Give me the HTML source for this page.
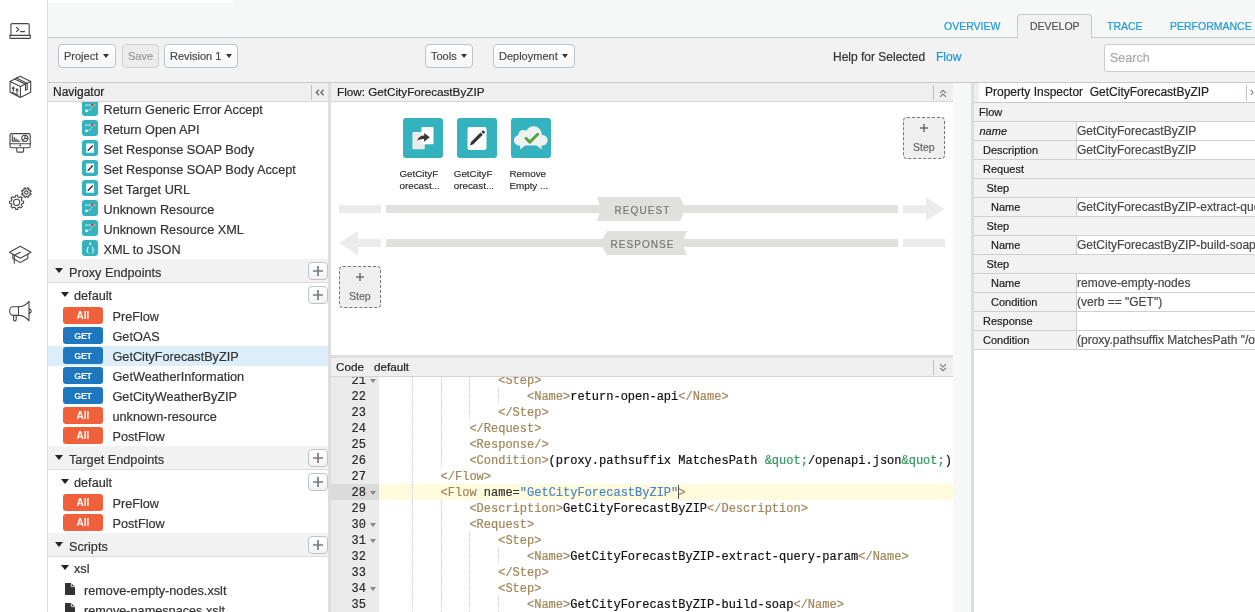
<!DOCTYPE html><html><head><meta charset="utf-8"><style>
*{box-sizing:border-box;margin:0;padding:0}
html,body{width:1255px;height:612px;overflow:hidden;background:#fff;font-family:"Liberation Sans",sans-serif;color:#333}
.a{position:absolute;white-space:nowrap}
svg{display:block}
#root div,#root span{-webkit-text-stroke-width:0.2px}
.tab{top:21px;font-size:10.5px;color:#1d9ad6;line-height:10px}
.btn{top:44px;height:24px;border:1px solid #b9c3ca;border-radius:4px;background:linear-gradient(#fff,#f5f5f5);font-size:11px;color:#4a4a4a;line-height:22px;padding-left:5px}
.caret{display:inline-block;width:0;height:0;border-left:3.5px solid transparent;border-right:3.5px solid transparent;border-top:4.5px solid #333;vertical-align:middle;margin-left:4.5px;margin-top:-2px}
.hdr{background:#efefef;border-bottom:1px solid #d5d5d5;font-size:12px;color:#222}
.tx{font-size:12.7px;color:#333;line-height:16px;-webkit-text-stroke:0.25px #333}
.sec{background:#f2f2f2;border-bottom:1px solid #dcdcdc}
.tri{width:0;height:0;border-left:4px solid transparent;border-right:4px solid transparent;border-top:5px solid #222}
.plus{width:20px;height:18px;border:1px solid #b9c3ca;border-radius:4px;background:linear-gradient(#fff,#f3f3f3)}
.badge{width:40px;height:16.6px;border-radius:3px;color:#fff;font-weight:bold;font-size:10px;text-align:center;line-height:17px}
.get{letter-spacing:-0.4px;font-size:9px;line-height:18px}
#root .badge{-webkit-text-stroke-width:0}
.all{background:#f0603a}
.get{background:#1f77c0}
.code{font-family:'Liberation Mono',monospace;font-size:12px;line-height:16px;white-space:pre;-webkit-text-stroke:0.2px currentColor}
.code span{-webkit-text-stroke:0.2px currentColor}
.pic{width:16px;height:16px;border-radius:3px;background:#34b2bd}
</style></head><body><div id="root" style="position:absolute;left:0;top:0;width:1255px;height:612px;overflow:hidden;background:#fff;will-change:transform">
<div class="a" style="left:0;top:0;width:48px;height:612px;background:#fff;border-right:1px solid #dcdcdc"></div>
<div class="a" style="left:48px;top:0;width:1207px;height:38px;background:#f6f8f8;border-bottom:1px solid #c9c9c9"></div>
<div class="a" style="left:48px;top:0;width:185px;height:3px;background:#fff"></div>
<div class="a tab" style="left:944px">OVERVIEW</div>
<div class="a" style="left:1017px;top:14px;width:75px;height:25px;background:#f2f2f2;border:1px solid #c9c9c9;border-bottom:none;border-radius:4px 4px 0 0"></div>
<div class="a tab" style="left:1030px;color:#555">DEVELOP</div>
<div class="a tab" style="left:1107px">TRACE</div>
<div class="a tab" style="left:1170px">PERFORMANCE</div>
<div class="a" style="left:48px;top:38px;width:1207px;height:45px;background:#f2f2f2;border-bottom:1px solid #c9c9c9"></div>
<div class="a btn" style="left:58px;width:58px">Project<span class="caret"></span></div>
<div class="a btn" style="left:122px;width:37px;color:#999;background:#ececec;border-color:#cfd5d9">Save</div>
<div class="a btn" style="left:164px;width:74px">Revision 1<span class="caret"></span></div>
<div class="a btn" style="left:425px;width:48px">Tools<span class="caret"></span></div>
<div class="a btn" style="left:493px;width:82px">Deployment<span class="caret"></span></div>
<div class="a" style="left:833px;top:50px;font-size:12px;color:#333">Help for Selected</div>
<div class="a" style="left:936px;top:50px;font-size:12px;color:#1d9ad6">Flow</div>
<div class="a" style="left:1104px;top:44px;width:160px;height:28px;background:#fff;border:1px solid #ccc;border-radius:3px;font-size:12.5px;color:#aaa;padding:6px 0 0 5px">Search</div>
<div class="a hdr" style="left:48px;top:83px;width:280px;height:19px"></div>
<div class="a" style="left:53px;top:85px;font-size:12px;color:#222">Navigator</div>
<div class="a" style="left:311px;top:85px;width:1px;height:15px;background:#b8c4cc"></div>
<svg class="a" style="left:315px;top:88.5px" width="10" height="7" viewBox="0 0 10 7"><path d="M4 0.8L1.4 3.5L4 6.2M8.6 0.8L6 3.5L8.6 6.2" stroke="#6a6a6a" stroke-width="1.4" fill="none"/></svg>
<div class="a" style="left:328px;top:83px;width:3px;height:529px;background:#dedede"></div>
<div class="a" style="left:48px;top:102px;width:280px;height:510px;overflow:hidden">
<div class="a" style="left:34px;top:-2px;width:16px;height:16px"><svg width="16" height="16" viewBox="0 0 16 16"><rect width="16" height="16" rx="3" fill="#34b2bd"/><path d="M3 5.1H13.2" stroke="#fff" stroke-opacity="0.85" stroke-width="0.9"/><path d="M10.3 5.6C10.2 8.6 7.8 10.8 4.8 10.8" stroke="#fff" stroke-width="0.9" stroke-dasharray="1.1 0.7" fill="none"/><circle cx="4.5" cy="10.8" r="1.35" fill="#fff"/><circle cx="10.3" cy="5.1" r="1.25" fill="#e8281e"/></svg></div>
<div class="a tx" style="left:55.5px;top:0px">Return Generic Error Accept</div>
<div class="a" style="left:34px;top:18px;width:16px;height:16px"><svg width="16" height="16" viewBox="0 0 16 16"><rect width="16" height="16" rx="3" fill="#34b2bd"/><path d="M3 5.1H13.2" stroke="#fff" stroke-opacity="0.85" stroke-width="0.9"/><path d="M10.3 5.6C10.2 8.6 7.8 10.8 4.8 10.8" stroke="#fff" stroke-width="0.9" stroke-dasharray="1.1 0.7" fill="none"/><circle cx="4.5" cy="10.8" r="1.35" fill="#fff"/><circle cx="10.3" cy="5.1" r="1.25" fill="#e8281e"/></svg></div>
<div class="a tx" style="left:55.5px;top:20px">Return Open API</div>
<div class="a" style="left:34px;top:38px;width:16px;height:16px"><svg width="16" height="16" viewBox="0 0 16 16"><rect width="16" height="16" rx="3" fill="#34b2bd"/><rect x="4.2" y="3.5" width="7.8" height="9.2" fill="#fff"/><path d="M5.8 10.8L10.8 5.4" stroke="#333" stroke-width="1.4"/><path d="M5.3 11.3L6 10.6" stroke="#e8281e" stroke-width="0.6"/></svg></div>
<div class="a tx" style="left:55.5px;top:40px">Set Response SOAP Body</div>
<div class="a" style="left:34px;top:58px;width:16px;height:16px"><svg width="16" height="16" viewBox="0 0 16 16"><rect width="16" height="16" rx="3" fill="#34b2bd"/><rect x="4.2" y="3.5" width="7.8" height="9.2" fill="#fff"/><path d="M5.8 10.8L10.8 5.4" stroke="#333" stroke-width="1.4"/><path d="M5.3 11.3L6 10.6" stroke="#e8281e" stroke-width="0.6"/></svg></div>
<div class="a tx" style="left:55.5px;top:60px">Set Response SOAP Body Accept</div>
<div class="a" style="left:34px;top:78px;width:16px;height:16px"><svg width="16" height="16" viewBox="0 0 16 16"><rect width="16" height="16" rx="3" fill="#34b2bd"/><rect x="4.2" y="3.5" width="7.8" height="9.2" fill="#fff"/><path d="M5.8 10.8L10.8 5.4" stroke="#333" stroke-width="1.4"/><path d="M5.3 11.3L6 10.6" stroke="#e8281e" stroke-width="0.6"/></svg></div>
<div class="a tx" style="left:55.5px;top:80px">Set Target URL</div>
<div class="a" style="left:34px;top:98px;width:16px;height:16px"><svg width="16" height="16" viewBox="0 0 16 16"><rect width="16" height="16" rx="3" fill="#34b2bd"/><path d="M3 5.1H13.2" stroke="#fff" stroke-opacity="0.85" stroke-width="0.9"/><path d="M10.3 5.6C10.2 8.6 7.8 10.8 4.8 10.8" stroke="#fff" stroke-width="0.9" stroke-dasharray="1.1 0.7" fill="none"/><circle cx="4.5" cy="10.8" r="1.35" fill="#fff"/><circle cx="10.3" cy="5.1" r="1.25" fill="#e8281e"/></svg></div>
<div class="a tx" style="left:55.5px;top:100px">Unknown Resource</div>
<div class="a" style="left:34px;top:118px;width:16px;height:16px"><svg width="16" height="16" viewBox="0 0 16 16"><rect width="16" height="16" rx="3" fill="#34b2bd"/><path d="M3 5.1H13.2" stroke="#fff" stroke-opacity="0.85" stroke-width="0.9"/><path d="M10.3 5.6C10.2 8.6 7.8 10.8 4.8 10.8" stroke="#fff" stroke-width="0.9" stroke-dasharray="1.1 0.7" fill="none"/><circle cx="4.5" cy="10.8" r="1.35" fill="#fff"/><circle cx="10.3" cy="5.1" r="1.25" fill="#e8281e"/></svg></div>
<div class="a tx" style="left:55.5px;top:120px">Unknown Resource XML</div>
<div class="a" style="left:34px;top:138px;width:16px;height:16px"><svg width="16" height="16" viewBox="0 0 16 16"><rect width="16" height="16" rx="3" fill="#34b2bd"/><ellipse cx="8.2" cy="3.7" rx="0.9" ry="1.3" fill="#fff"/><path d="M6.5 7C5.3 7 5.6 8.6 5.4 9.8C5.3 10.2 4.8 10.3 4.4 10.3C4.8 10.3 5.3 10.4 5.4 10.8C5.6 12 5.3 13.2 6.5 13.2M9.9 7C11.1 7 10.8 8.6 11 9.8C11.1 10.2 11.6 10.3 12 10.3C11.6 10.3 11.1 10.4 11 10.8C10.8 12 11.1 13.2 9.9 13.2" stroke="#fff" stroke-width="1" fill="none"/></svg></div>
<div class="a tx" style="left:55.5px;top:140px">XML to JSON</div>
<div class="a sec" style="left:0px;top:157px;width:280px;height:24px"></div>
<div class="a tri" style="left:7px;top:166px"></div>
<div class="a tx" style="left:21px;top:162.5px">Proxy Endpoints</div>
<div class="a plus" style="left:260px;top:160px"></div>
<svg class="a" style="left:265px;top:163.5px" width="10" height="10" viewBox="0 0 10 10"><path d="M0 5H10M5 0V10" stroke="#7a7a7a" stroke-width="1.7"/></svg>
<div class="a tri" style="left:12.5px;top:190px"></div>
<div class="a tx" style="left:26px;top:185.8px">default</div>
<div class="a plus" style="left:260px;top:184px"></div>
<svg class="a" style="left:265px;top:187.5px" width="10" height="10" viewBox="0 0 10 10"><path d="M0 5H10M5 0V10" stroke="#7a7a7a" stroke-width="1.7"/></svg>
<div class="a badge all" style="left:15px;top:205.3px">All</div>
<div class="a tx" style="left:64.5px;top:207px">PreFlow</div>
<div class="a badge get" style="left:15px;top:225.3px">GET</div>
<div class="a tx" style="left:64.5px;top:227px">GetOAS</div>
<div class="a" style="left:0px;top:244px;width:280px;height:20px;background:#dbeefa"></div>
<div class="a badge get" style="left:15px;top:245.3px">GET</div>
<div class="a tx" style="left:64.5px;top:247px">GetCityForecastByZIP</div>
<div class="a badge get" style="left:15px;top:265.3px">GET</div>
<div class="a tx" style="left:64.5px;top:267px">GetWeatherInformation</div>
<div class="a badge get" style="left:15px;top:285.3px">GET</div>
<div class="a tx" style="left:64.5px;top:287px">GetCityWeatherByZIP</div>
<div class="a badge all" style="left:15px;top:305.3px">All</div>
<div class="a tx" style="left:64.5px;top:307px">unknown-resource</div>
<div class="a badge all" style="left:15px;top:325.3px">All</div>
<div class="a tx" style="left:64.5px;top:327px">PostFlow</div>
<div class="a sec" style="left:0px;top:344px;width:280px;height:24px"></div>
<div class="a tri" style="left:7px;top:353px"></div>
<div class="a tx" style="left:21px;top:349.5px">Target Endpoints</div>
<div class="a plus" style="left:260px;top:347px"></div>
<svg class="a" style="left:265px;top:350.5px" width="10" height="10" viewBox="0 0 10 10"><path d="M0 5H10M5 0V10" stroke="#7a7a7a" stroke-width="1.7"/></svg>
<div class="a tri" style="left:12.5px;top:377px"></div>
<div class="a tx" style="left:26px;top:372.8px">default</div>
<div class="a plus" style="left:260px;top:371px"></div>
<svg class="a" style="left:265px;top:374.5px" width="10" height="10" viewBox="0 0 10 10"><path d="M0 5H10M5 0V10" stroke="#7a7a7a" stroke-width="1.7"/></svg>
<div class="a badge all" style="left:15px;top:392.3px">All</div>
<div class="a tx" style="left:64.5px;top:394px">PreFlow</div>
<div class="a badge all" style="left:15px;top:412.29999999999995px">All</div>
<div class="a tx" style="left:64.5px;top:414px">PostFlow</div>
<div class="a sec" style="left:0px;top:431px;width:280px;height:24px"></div>
<div class="a tri" style="left:7px;top:440px"></div>
<div class="a tx" style="left:21px;top:436.5px">Scripts</div>
<div class="a plus" style="left:260px;top:434px"></div>
<svg class="a" style="left:265px;top:437.5px" width="10" height="10" viewBox="0 0 10 10"><path d="M0 5H10M5 0V10" stroke="#7a7a7a" stroke-width="1.7"/></svg>
<div class="a tri" style="left:12.5px;top:463px"></div>
<div class="a tx" style="left:26px;top:458.79999999999995px">xsl</div>
<div class="a" style="left:17px;top:481px"><svg width="10" height="12" viewBox="0 0 10 12"><path d="M0 0H6L10 4V12H0Z" fill="#333"/><path d="M6.3 0.3V3.7H9.7" fill="none" stroke="#fff" stroke-width="0.8"/></svg></div>
<div class="a tx" style="left:36px;top:480.5px">remove-empty-nodes.xslt</div>
<div class="a" style="left:17px;top:501px"><svg width="10" height="12" viewBox="0 0 10 12"><path d="M0 0H6L10 4V12H0Z" fill="#333"/><path d="M6.3 0.3V3.7H9.7" fill="none" stroke="#fff" stroke-width="0.8"/></svg></div>
<div class="a tx" style="left:36px;top:500.5px">remove-namespaces.xslt</div>
</div>
<div class="a hdr" style="left:331px;top:83px;width:622px;height:19px"></div>
<div class="a" style="left:337px;top:85px;font-size:11.7px;color:#222">Flow: GetCityForecastByZIP</div>
<div class="a" style="left:933px;top:85px;width:1px;height:15px;background:#b8c4cc"></div>
<div class="a" style="left:939px;top:89px"><svg width="8" height="9" viewBox="0 0 8 9"><path d="M1 4.2L4 1.3L7 4.2M1 7.9L4 5L7 7.9" stroke="#7a7a7a" stroke-width="1.1" fill="none"/></svg></div>
<div class="a" style="left:953px;top:83px;width:18px;height:529px;background:#f6f8f8"></div>
<div class="a" style="left:971px;top:83px;width:3px;height:529px;background:#dedede"></div>
<div class="a" style="left:403px;top:118px;width:40px;height:40px"><svg width="40" height="40" viewBox="0 0 40 40"><rect width="40" height="40" rx="3" fill="#34b2bd"/><rect x="9.4" y="13.9" width="12.4" height="17.3" rx="1.2" fill="#ebebeb"/><rect x="18.4" y="9" width="12.1" height="17.3" rx="1.2" fill="#fff"/><path d="M14.2 23C15 19.6 17.5 17.6 21.2 17.6V14.9L26.8 19.3L21 23.8V21.1C18.3 20.9 16 21.6 14.2 23Z" fill="#3a3a3a"/></svg></div>
<div class="a" style="left:399.5px;top:168.2px;font-size:9.8px;line-height:12px;color:#2a2a2a;-webkit-text-stroke:0.15px #2a2a2a">GetCityF<br>orecast...</div>
<div class="a" style="left:457px;top:118px;width:40px;height:40px"><svg width="40" height="40" viewBox="0 0 40 40"><rect width="40" height="40" rx="3" fill="#34b2bd"/><rect x="10.5" y="9" width="19" height="23" rx="2" fill="#fff"/><path d="M13 27.5L14 24L23.5 14.5L25.8 16.8L16.3 26.3Z" fill="#333"/><path d="M24.3 13.7L25.3 12.7C25.7 12.3 26.3 12.3 26.7 12.7L27.6 13.6C28 14 28 14.6 27.6 15L26.6 16Z" fill="#333"/></svg></div>
<div class="a" style="left:453.8px;top:168.2px;font-size:9.8px;line-height:12px;color:#2a2a2a;-webkit-text-stroke:0.15px #2a2a2a">GetCityF<br>orecast...</div>
<div class="a" style="left:511px;top:118px;width:40px;height:40px"><svg width="40" height="40" viewBox="0 0 40 40"><rect width="40" height="40" rx="3" fill="#34b2bd"/><g fill="#eef1f1"><circle cx="8" cy="22.3" r="5.1"/><circle cx="12.3" cy="17" r="5"/><circle cx="22.6" cy="16.6" r="8.3"/><circle cx="31.4" cy="22.3" r="5.2"/><rect x="8" y="19" width="23.5" height="8.5"/><path d="M9.3 27H14.8L9 31.6Z"/><path d="M25.2 27H30.4L30.6 31.6Z"/></g><path d="M15 20.3L18.8 24.1L26.7 16.2" stroke="#5aa13d" stroke-width="2.9" stroke-linecap="round" stroke-linejoin="round" fill="none"/></svg></div>
<div class="a" style="left:509.5px;top:168.2px;font-size:9.8px;line-height:12px;color:#2a2a2a;-webkit-text-stroke:0.15px #2a2a2a">Remove<br>Empty ...</div>
<div class="a" style="left:903px;top:117px;width:42px;height:42px;background:#efefef;border:1px dashed #777;border-radius:4px"></div>
<svg class="a" style="left:919.5px;top:123.5px" width="8" height="8" viewBox="0 0 8 8"><path d="M0 4H8M4 0V8" stroke="#6f6f6f" stroke-width="1.5"/></svg>
<div class="a" style="left:913px;top:141px;font-size:10.5px;line-height:12px;color:#666">Step</div>
<div class="a" style="left:339px;top:266px;width:42px;height:42px;background:#efefef;border:1px dashed #777;border-radius:4px"></div>
<svg class="a" style="left:355.5px;top:272.5px" width="8" height="8" viewBox="0 0 8 8"><path d="M0 4H8M4 0V8" stroke="#6f6f6f" stroke-width="1.5"/></svg>
<div class="a" style="left:349px;top:290px;font-size:10.5px;line-height:12px;color:#666">Step</div>
<svg class="a" style="left:331px;top:190px" width="622" height="70" viewBox="331 190 622 70">
<rect x="339" y="205" width="42" height="8" fill="#ebebeb"/>
<rect x="386" y="205" width="512" height="8" fill="#e0e0df"/>
<path d="M903 205H926V197L944.6 209L926 221V213H903Z" fill="#ebebeb"/>
<path d="M597 197H680L685.7 209L680 221H597L601 209Z" fill="#e0e0df"/>
<rect x="386" y="239" width="512" height="8" fill="#e0e0df"/>
<rect x="903" y="239" width="42" height="8" fill="#ebebeb"/>
<path d="M381 239H358V231L339.3 243L358 255V247H381Z" fill="#ebebeb"/>
<path d="M607 231H687L681.7 243L687 255H607L600 243Z" fill="#e0e0df"/>
</svg>
<div class="a" style="left:614.5px;top:205.5px;font-size:10px;line-height:10px;letter-spacing:1.1px;color:#777">REQUEST</div>
<div class="a" style="left:610.5px;top:239.5px;font-size:10px;line-height:10px;letter-spacing:1.05px;color:#777">RESPONSE</div>
<div class="a" style="left:331px;top:355px;width:622px;height:3px;background:#dedede"></div>
<div class="a hdr" style="left:331px;top:358px;width:622px;height:19px"></div>
<div class="a" style="left:336px;top:360.2px;font-size:11.7px;color:#222">Code</div>
<div class="a" style="left:374px;top:360.2px;font-size:11.7px;color:#222">default</div>
<div class="a" style="left:933px;top:360px;width:1px;height:15px;background:#b8c4cc"></div>
<div class="a" style="left:939px;top:363px"><svg width="8" height="9" viewBox="0 0 8 9"><path d="M1 1.1L4 4L7 1.1M1 4.8L4 7.7L7 4.8" stroke="#7a7a7a" stroke-width="1.1" fill="none"/></svg></div>
<div class="a" style="left:331px;top:377px;width:622px;height:235px;overflow:hidden;background:#fff">
<div class="a" style="left:0;top:0;width:48px;height:235px;background:#ebebeb"></div>
<div class="a" style="left:0;top:-4.3px;width:35px;text-align:right;font-family:'Liberation Mono',monospace;font-size:12px;line-height:16px;color:#2a2a2a;-webkit-text-stroke:0.2px #2a2a2a">21</div>
<div class="a" style="left:39px;top:2px;width:0;height:0;border-left:3px solid transparent;border-right:3px solid transparent;border-top:4px solid #888"></div>
<div class="a" style="left:80.8px;top:-5px;width:0;height:16px;border-left:1px dotted #ccc"></div>
<div class="a" style="left:109.6px;top:-5px;width:0;height:16px;border-left:1px dotted #ccc"></div>
<div class="a" style="left:138.4px;top:-5px;width:0;height:16px;border-left:1px dotted #ccc"></div>
<div class="a code" style="left:167.2px;top:-4.3px"><span style="color:#a0865a">&lt;Step&gt;</span></div>
<div class="a" style="left:0;top:11.7px;width:35px;text-align:right;font-family:'Liberation Mono',monospace;font-size:12px;line-height:16px;color:#2a2a2a;-webkit-text-stroke:0.2px #2a2a2a">22</div>
<div class="a" style="left:80.8px;top:11px;width:0;height:16px;border-left:1px dotted #ccc"></div>
<div class="a" style="left:109.6px;top:11px;width:0;height:16px;border-left:1px dotted #ccc"></div>
<div class="a" style="left:138.4px;top:11px;width:0;height:16px;border-left:1px dotted #ccc"></div>
<div class="a" style="left:167.2px;top:11px;width:0;height:16px;border-left:1px dotted #ccc"></div>
<div class="a code" style="left:196.0px;top:11.7px"><span style="color:#a0865a">&lt;Name&gt;</span><span style="color:#111">return-open-api</span><span style="color:#a0865a">&lt;/Name&gt;</span></div>
<div class="a" style="left:0;top:27.7px;width:35px;text-align:right;font-family:'Liberation Mono',monospace;font-size:12px;line-height:16px;color:#2a2a2a;-webkit-text-stroke:0.2px #2a2a2a">23</div>
<div class="a" style="left:80.8px;top:27px;width:0;height:16px;border-left:1px dotted #ccc"></div>
<div class="a" style="left:109.6px;top:27px;width:0;height:16px;border-left:1px dotted #ccc"></div>
<div class="a" style="left:138.4px;top:27px;width:0;height:16px;border-left:1px dotted #ccc"></div>
<div class="a code" style="left:167.2px;top:27.7px"><span style="color:#a0865a">&lt;/Step&gt;</span></div>
<div class="a" style="left:0;top:43.7px;width:35px;text-align:right;font-family:'Liberation Mono',monospace;font-size:12px;line-height:16px;color:#2a2a2a;-webkit-text-stroke:0.2px #2a2a2a">24</div>
<div class="a" style="left:80.8px;top:43px;width:0;height:16px;border-left:1px dotted #ccc"></div>
<div class="a" style="left:109.6px;top:43px;width:0;height:16px;border-left:1px dotted #ccc"></div>
<div class="a code" style="left:138.4px;top:43.7px"><span style="color:#a0865a">&lt;/Request&gt;</span></div>
<div class="a" style="left:0;top:59.7px;width:35px;text-align:right;font-family:'Liberation Mono',monospace;font-size:12px;line-height:16px;color:#2a2a2a;-webkit-text-stroke:0.2px #2a2a2a">25</div>
<div class="a" style="left:80.8px;top:59px;width:0;height:16px;border-left:1px dotted #ccc"></div>
<div class="a" style="left:109.6px;top:59px;width:0;height:16px;border-left:1px dotted #ccc"></div>
<div class="a code" style="left:138.4px;top:59.7px"><span style="color:#a0865a">&lt;Response/&gt;</span></div>
<div class="a" style="left:0;top:75.7px;width:35px;text-align:right;font-family:'Liberation Mono',monospace;font-size:12px;line-height:16px;color:#2a2a2a;-webkit-text-stroke:0.2px #2a2a2a">26</div>
<div class="a" style="left:80.8px;top:75px;width:0;height:16px;border-left:1px dotted #ccc"></div>
<div class="a" style="left:109.6px;top:75px;width:0;height:16px;border-left:1px dotted #ccc"></div>
<div class="a code" style="left:138.4px;top:75.7px"><span style="color:#a0865a">&lt;Condition&gt;</span><span style="color:#111">(proxy.pathsuffix MatchesPath </span><span style="color:#2e9a5e">&amp;quot;</span><span style="color:#111">/openapi.json</span><span style="color:#2e9a5e">&amp;quot;</span><span style="color:#111">)</span></div>
<div class="a" style="left:0;top:91.7px;width:35px;text-align:right;font-family:'Liberation Mono',monospace;font-size:12px;line-height:16px;color:#2a2a2a;-webkit-text-stroke:0.2px #2a2a2a">27</div>
<div class="a" style="left:80.8px;top:91px;width:0;height:16px;border-left:1px dotted #ccc"></div>
<div class="a code" style="left:109.6px;top:91.7px"><span style="color:#a0865a">&lt;/Flow&gt;</span></div>
<div class="a" style="left:0;top:107px;width:48px;height:16px;background:#dadada"></div>
<div class="a" style="left:48px;top:107px;width:574px;height:16px;background:#fffbdd"></div>
<div class="a" style="left:0;top:107.7px;width:35px;text-align:right;font-family:'Liberation Mono',monospace;font-size:12px;line-height:16px;color:#2a2a2a;-webkit-text-stroke:0.2px #2a2a2a">28</div>
<div class="a" style="left:39px;top:114px;width:0;height:0;border-left:3px solid transparent;border-right:3px solid transparent;border-top:4px solid #888"></div>
<div class="a" style="left:80.8px;top:107px;width:0;height:16px;border-left:1px dotted #ccc"></div>
<div class="a code" style="left:109.6px;top:107.7px"><span style="color:#a0865a">&lt;Flow</span> <span style="color:#333">name=</span><span style="color:#4a86c8">"GetCityForecastByZIP"</span><span style="color:#a0865a">&gt;</span></div>
<div class="a" style="left:0;top:123.7px;width:35px;text-align:right;font-family:'Liberation Mono',monospace;font-size:12px;line-height:16px;color:#2a2a2a;-webkit-text-stroke:0.2px #2a2a2a">29</div>
<div class="a" style="left:80.8px;top:123px;width:0;height:16px;border-left:1px dotted #ccc"></div>
<div class="a" style="left:109.6px;top:123px;width:0;height:16px;border-left:1px dotted #ccc"></div>
<div class="a code" style="left:138.4px;top:123.7px"><span style="color:#a0865a">&lt;Description&gt;</span><span style="color:#111">GetCityForecastByZIP</span><span style="color:#a0865a">&lt;/Description&gt;</span></div>
<div class="a" style="left:0;top:139.7px;width:35px;text-align:right;font-family:'Liberation Mono',monospace;font-size:12px;line-height:16px;color:#2a2a2a;-webkit-text-stroke:0.2px #2a2a2a">30</div>
<div class="a" style="left:39px;top:146px;width:0;height:0;border-left:3px solid transparent;border-right:3px solid transparent;border-top:4px solid #888"></div>
<div class="a" style="left:80.8px;top:139px;width:0;height:16px;border-left:1px dotted #ccc"></div>
<div class="a" style="left:109.6px;top:139px;width:0;height:16px;border-left:1px dotted #ccc"></div>
<div class="a code" style="left:138.4px;top:139.7px"><span style="color:#a0865a">&lt;Request&gt;</span></div>
<div class="a" style="left:0;top:155.7px;width:35px;text-align:right;font-family:'Liberation Mono',monospace;font-size:12px;line-height:16px;color:#2a2a2a;-webkit-text-stroke:0.2px #2a2a2a">31</div>
<div class="a" style="left:39px;top:162px;width:0;height:0;border-left:3px solid transparent;border-right:3px solid transparent;border-top:4px solid #888"></div>
<div class="a" style="left:80.8px;top:155px;width:0;height:16px;border-left:1px dotted #ccc"></div>
<div class="a" style="left:109.6px;top:155px;width:0;height:16px;border-left:1px dotted #ccc"></div>
<div class="a" style="left:138.4px;top:155px;width:0;height:16px;border-left:1px dotted #ccc"></div>
<div class="a code" style="left:167.2px;top:155.7px"><span style="color:#a0865a">&lt;Step&gt;</span></div>
<div class="a" style="left:0;top:171.7px;width:35px;text-align:right;font-family:'Liberation Mono',monospace;font-size:12px;line-height:16px;color:#2a2a2a;-webkit-text-stroke:0.2px #2a2a2a">32</div>
<div class="a" style="left:80.8px;top:171px;width:0;height:16px;border-left:1px dotted #ccc"></div>
<div class="a" style="left:109.6px;top:171px;width:0;height:16px;border-left:1px dotted #ccc"></div>
<div class="a" style="left:138.4px;top:171px;width:0;height:16px;border-left:1px dotted #ccc"></div>
<div class="a" style="left:167.2px;top:171px;width:0;height:16px;border-left:1px dotted #ccc"></div>
<div class="a code" style="left:196.0px;top:171.7px"><span style="color:#a0865a">&lt;Name&gt;</span><span style="color:#111">GetCityForecastByZIP-extract-query-param</span><span style="color:#a0865a">&lt;/Name&gt;</span></div>
<div class="a" style="left:0;top:187.7px;width:35px;text-align:right;font-family:'Liberation Mono',monospace;font-size:12px;line-height:16px;color:#2a2a2a;-webkit-text-stroke:0.2px #2a2a2a">33</div>
<div class="a" style="left:80.8px;top:187px;width:0;height:16px;border-left:1px dotted #ccc"></div>
<div class="a" style="left:109.6px;top:187px;width:0;height:16px;border-left:1px dotted #ccc"></div>
<div class="a" style="left:138.4px;top:187px;width:0;height:16px;border-left:1px dotted #ccc"></div>
<div class="a code" style="left:167.2px;top:187.7px"><span style="color:#a0865a">&lt;/Step&gt;</span></div>
<div class="a" style="left:0;top:203.7px;width:35px;text-align:right;font-family:'Liberation Mono',monospace;font-size:12px;line-height:16px;color:#2a2a2a;-webkit-text-stroke:0.2px #2a2a2a">34</div>
<div class="a" style="left:39px;top:210px;width:0;height:0;border-left:3px solid transparent;border-right:3px solid transparent;border-top:4px solid #888"></div>
<div class="a" style="left:80.8px;top:203px;width:0;height:16px;border-left:1px dotted #ccc"></div>
<div class="a" style="left:109.6px;top:203px;width:0;height:16px;border-left:1px dotted #ccc"></div>
<div class="a" style="left:138.4px;top:203px;width:0;height:16px;border-left:1px dotted #ccc"></div>
<div class="a code" style="left:167.2px;top:203.7px"><span style="color:#a0865a">&lt;Step&gt;</span></div>
<div class="a" style="left:0;top:219.7px;width:35px;text-align:right;font-family:'Liberation Mono',monospace;font-size:12px;line-height:16px;color:#2a2a2a;-webkit-text-stroke:0.2px #2a2a2a">35</div>
<div class="a" style="left:80.8px;top:219px;width:0;height:16px;border-left:1px dotted #ccc"></div>
<div class="a" style="left:109.6px;top:219px;width:0;height:16px;border-left:1px dotted #ccc"></div>
<div class="a" style="left:138.4px;top:219px;width:0;height:16px;border-left:1px dotted #ccc"></div>
<div class="a" style="left:167.2px;top:219px;width:0;height:16px;border-left:1px dotted #ccc"></div>
<div class="a code" style="left:196.0px;top:219.7px"><span style="color:#a0865a">&lt;Name&gt;</span><span style="color:#111">GetCityForecastByZIP-build-soap</span><span style="color:#a0865a">&lt;/Name&gt;</span></div>
<div class="a" style="left:347.2px;top:108px;width:1px;height:14px;background:#555"></div>
</div>
<div class="a" style="left:974px;top:83px;width:281px;height:20px;background:#efefef;border-bottom:1px solid #c9c9c9"></div>
<div class="a" style="left:979px;top:83px;width:276px;height:19px;background:#fff"></div>
<div class="a" style="left:985px;top:85px;font-size:12px;color:#222">Property Inspector&nbsp; GetCityForecastByZIP</div>
<div class="a" style="left:1246px;top:85px;width:1px;height:16px;background:#b8c4cc"></div>
<div class="a" style="left:1250px;top:85px;font-size:12px;color:#888">&rsaquo;</div>
<div class="a" style="left:974px;top:102px;width:281px;height:250px;overflow:hidden">
<div class="a" style="left:0;top:1px;width:281px;height:19px;background:#f2f2f2;border-bottom:1px solid #cfcfcf"></div>
<div class="a" style="left:5px;top:3px;font-size:11px;line-height:14px;color:#222;">Flow</div>
<div class="a" style="left:0;top:20px;width:281px;height:19px;background:#f2f2f2;border-bottom:1px solid #cfcfcf"></div>
<div class="a" style="left:5.5px;top:22px;font-size:11px;line-height:14px;color:#222;font-style:italic;">name</div>
<div class="a" style="left:102px;top:20px;width:179px;height:18px;background:#fff;border-left:1px solid #cfcfcf"></div>
<div class="a" style="left:103px;top:22px;font-size:12px;line-height:14px;color:#484848">GetCityForecastByZIP</div>
<div class="a" style="left:0;top:39px;width:281px;height:19px;background:#f2f2f2;border-bottom:1px solid #cfcfcf"></div>
<div class="a" style="left:9px;top:41px;font-size:11px;line-height:14px;color:#222;">Description</div>
<div class="a" style="left:102px;top:39px;width:179px;height:18px;background:#fff;border-left:1px solid #cfcfcf"></div>
<div class="a" style="left:103px;top:41px;font-size:12px;line-height:14px;color:#484848">GetCityForecastByZIP</div>
<div class="a" style="left:0;top:58px;width:281px;height:19px;background:#f2f2f2;border-bottom:1px solid #cfcfcf"></div>
<div class="a" style="left:9px;top:60px;font-size:11px;line-height:14px;color:#222;">Request</div>
<div class="a" style="left:0;top:77px;width:281px;height:19px;background:#f2f2f2;border-bottom:1px solid #cfcfcf"></div>
<div class="a" style="left:12.5px;top:79px;font-size:11px;line-height:14px;color:#222;">Step</div>
<div class="a" style="left:0;top:96px;width:281px;height:19px;background:#f2f2f2;border-bottom:1px solid #cfcfcf"></div>
<div class="a" style="left:17px;top:98px;font-size:11px;line-height:14px;color:#222;">Name</div>
<div class="a" style="left:102px;top:96px;width:179px;height:18px;background:#fff;border-left:1px solid #cfcfcf"></div>
<div class="a" style="left:103px;top:98px;font-size:12px;line-height:14px;color:#484848">GetCityForecastByZIP-extract-query-param</div>
<div class="a" style="left:0;top:115px;width:281px;height:19px;background:#f2f2f2;border-bottom:1px solid #cfcfcf"></div>
<div class="a" style="left:12.5px;top:117px;font-size:11px;line-height:14px;color:#222;">Step</div>
<div class="a" style="left:0;top:134px;width:281px;height:19px;background:#f2f2f2;border-bottom:1px solid #cfcfcf"></div>
<div class="a" style="left:17px;top:136px;font-size:11px;line-height:14px;color:#222;">Name</div>
<div class="a" style="left:102px;top:134px;width:179px;height:18px;background:#fff;border-left:1px solid #cfcfcf"></div>
<div class="a" style="left:103px;top:136px;font-size:12px;line-height:14px;color:#484848">GetCityForecastByZIP-build-soap</div>
<div class="a" style="left:0;top:153px;width:281px;height:19px;background:#f2f2f2;border-bottom:1px solid #cfcfcf"></div>
<div class="a" style="left:12.5px;top:155px;font-size:11px;line-height:14px;color:#222;">Step</div>
<div class="a" style="left:0;top:172px;width:281px;height:19px;background:#f2f2f2;border-bottom:1px solid #cfcfcf"></div>
<div class="a" style="left:17px;top:174px;font-size:11px;line-height:14px;color:#222;">Name</div>
<div class="a" style="left:102px;top:172px;width:179px;height:18px;background:#fff;border-left:1px solid #cfcfcf"></div>
<div class="a" style="left:103px;top:174px;font-size:12px;line-height:14px;color:#484848">remove-empty-nodes</div>
<div class="a" style="left:0;top:191px;width:281px;height:19px;background:#f2f2f2;border-bottom:1px solid #cfcfcf"></div>
<div class="a" style="left:17px;top:193px;font-size:11px;line-height:14px;color:#222;">Condition</div>
<div class="a" style="left:102px;top:191px;width:179px;height:18px;background:#fff;border-left:1px solid #cfcfcf"></div>
<div class="a" style="left:103px;top:193px;font-size:12px;line-height:14px;color:#484848">(verb == &quot;GET&quot;)</div>
<div class="a" style="left:0;top:210px;width:281px;height:19px;background:#f2f2f2;border-bottom:1px solid #cfcfcf"></div>
<div class="a" style="left:9px;top:212px;font-size:11px;line-height:14px;color:#222;">Response</div>
<div class="a" style="left:102px;top:210px;width:179px;height:18px;background:#fff;border-left:1px solid #cfcfcf"></div>
<div class="a" style="left:103px;top:212px;font-size:12px;line-height:14px;color:#484848"></div>
<div class="a" style="left:0;top:229px;width:281px;height:19px;background:#f2f2f2;border-bottom:1px solid #cfcfcf"></div>
<div class="a" style="left:9px;top:231px;font-size:11px;line-height:14px;color:#222;">Condition</div>
<div class="a" style="left:102px;top:229px;width:179px;height:18px;background:#fff;border-left:1px solid #cfcfcf"></div>
<div class="a" style="left:103px;top:231px;font-size:12px;line-height:14px;color:#484848">(proxy.pathsuffix MatchesPath &quot;/openapi.json&quot;)</div>
</div>
<svg class="a" style="left:0;top:0" width="47" height="340" viewBox="0 0 47 340"><g fill="none" stroke="#444" stroke-width="1.1" stroke-linejoin="round" stroke-linecap="round"><path d="M10.9 35.4V24.9C10.9 24.1 11.5 23.6 12.3 23.6H27.8C28.6 23.6 29.2 24.1 29.2 24.9V35.4"/><path d="M9.9 35.4H30.4V37.4C30.4 38 30 38.4 29.4 38.4H10.9C10.3 38.4 9.9 38 9.9 37.4Z"/><path d="M16.4 27.3L18.8 29.5L16.4 31.7M20.4 31.6H24.6"/><path d="M20.2 76.2L30.7 81.4V92.2L20.4 97.4L10.1 92.2V81.4Z"/><path d="M10.1 81.4L20.4 86.5L30.7 81.4M20.4 86.5V97.4M14.6 79L25.5 84.3V90.3L27.2 89.5V83.5L16.5 78.1"/><path d="M13.3 91.3V87.2M12.3 88.3L13.3 87L14.3 88.3M17 93.2V89M16 90.1L17 88.8L18 90.1M12.2 92.4L18.2 95.3"/><rect x="10" y="133.6" width="20.2" height="14.2" rx="1.5"/><path d="M10 143.7H30.2M16.8 148V151.2C16.8 151.8 17.2 152.1 17.8 152.1H22.6C23.2 152.1 23.6 151.8 23.6 151.2V148"/><circle cx="20.2" cy="145.6" r="0.45" fill="#444"/><path d="M12.3 135.3V141.3H19.8M14.2 141.3V137.4M16 141.3V138.5M17.8 141.3V139.7"/><circle cx="24.8" cy="138.3" r="3.1"/><path d="M25.2 135.3L24.8 138.3L27.8 138.9M24.8 138.3L22.6 140.6"/><circle cx="16.6" cy="202.3" r="3.1"/><path d="M15.32 196.95L15.60 195.27L17.60 195.27L17.88 196.95L19.47 197.61L20.86 196.62L22.28 198.04L21.29 199.43L21.95 201.02L23.63 201.30L23.63 203.30L21.95 203.58L21.29 205.17L22.28 206.56L20.86 207.98L19.47 206.99L17.88 207.65L17.60 209.33L15.60 209.33L15.32 207.65L13.73 206.99L12.34 207.98L10.92 206.56L11.91 205.17L11.25 203.58L9.57 203.30L9.57 201.30L11.25 201.02L11.91 199.43L10.92 198.04L12.34 196.62L13.73 197.61Z"/><circle cx="26.4" cy="192.6" r="1.7"/><path d="M26.98 188.95L27.62 187.85L28.89 188.38L28.57 189.61L29.39 190.43L30.62 190.11L31.15 191.38L30.05 192.02L30.05 193.18L31.15 193.82L30.62 195.09L29.39 194.77L28.57 195.59L28.89 196.82L27.62 197.35L26.98 196.25L25.82 196.25L25.18 197.35L23.91 196.82L24.23 195.59L23.41 194.77L22.18 195.09L21.65 193.82L22.75 193.18L22.75 192.02L21.65 191.38L22.18 190.11L23.41 190.43L24.23 189.61L23.91 188.38L25.18 187.85L25.82 188.95Z"/><path d="M20.3 246.3L31 252.3L20.3 258.3L9.5 252.3Z"/><path d="M12.8 254.2V258.5C15.5 259.5 18 261 20.3 262.6C22.6 261 25.1 259.5 27.8 258.5V254.2"/><path d="M20.3 252.3L14.3 255.3V263.3"/><path d="M18.5 306.8H13.2C11.1 306.8 9.6 308.8 9.6 311.1C9.6 313.4 11.1 315.4 13.2 315.4H18.5"/><path d="M18.5 306.8V315.4M18.5 306.8C23 306.8 26.5 304.5 29 301.3V320.8C26.5 317.6 23 315.4 18.5 315.4M29 308.6C30.4 309 31.2 310 31.2 311.1C31.2 312.2 30.4 313.2 29 313.6M13.6 315.4V319.6C13.6 320.4 14.2 320.9 14.9 320.9C15.6 320.9 16.2 320.4 16.2 319.6V315.4"/></g></svg>
</div></body></html>
